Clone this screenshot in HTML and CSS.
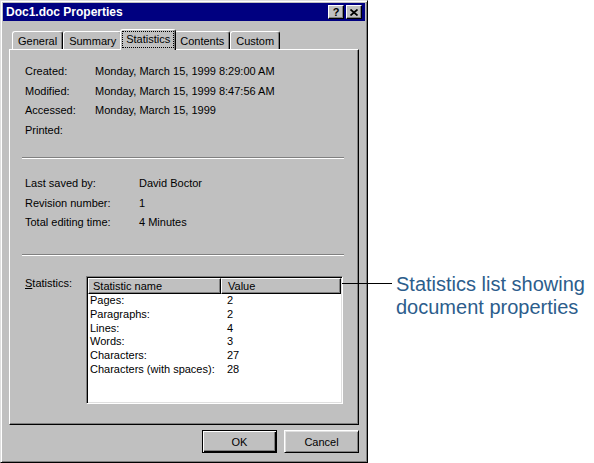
FILE: index.html
```html
<!DOCTYPE html>
<html>
<head>
<meta charset="utf-8">
<link rel="stylesheet" href="styles.css">
</head>
<body>
<div class="page">
  <div class="window">
    <div class="titlebar">
      <span class="title">Doc1.doc Properties</span>
      <div class="tbtns">
        <span class="tbtn help">?</span>
        <span class="tbtn close"><svg width="8" height="7" viewBox="0 0 8 7"><path d="M0.5 0.5 L7.5 6.5 M7.5 0.5 L0.5 6.5" stroke="#000" stroke-width="1.7" fill="none"/></svg></span>
      </div>
    </div>
    <div class="body">
      <div class="tabs">
        <div class="tab">General</div>
        <div class="tab">Summary</div>
        <div class="tab active"><span class="focus">Statistics</span></div>
        <div class="tab">Contents</div>
        <div class="tab">Custom</div>
      </div>
      <div class="panel">
        <div class="props p1">
          <span>Created:</span><span>Monday, March 15, 1999 8:29:00 AM</span>
          <span>Modified:</span><span>Monday, March 15, 1999 8:47:56 AM</span>
          <span>Accessed:</span><span>Monday, March 15, 1999</span>
          <span>Printed:</span><span></span>
        </div>
        <div class="sep s1"></div>
        <div class="props p2">
          <span>Last saved by:</span><span>David Boctor</span>
          <span>Revision number:</span><span>1</span>
          <span>Total editing time:</span><span>4 Minutes</span>
        </div>
        <div class="sep s2"></div>
        <div class="stats-row">
          <div class="stats-label"><u>S</u>tatistics:</div>
          <div class="listbox">
            <div class="lhead">
              <div class="hcell c1">Statistic name</div>
              <div class="hcell c2">Value</div>
            </div>
            <div class="lrows">
              <span>Pages:</span><span>2</span>
              <span>Paragraphs:</span><span>2</span>
              <span>Lines:</span><span>4</span>
              <span>Words:</span><span>3</span>
              <span>Characters:</span><span>27</span>
              <span>Characters (with spaces):</span><span>28</span>
            </div>
          </div>
        </div>
      </div>
      <div class="buttons">
        <button class="btn default">OK</button>
        <button class="btn">Cancel</button>
      </div>
    </div>
  </div>
  <div class="callout">
    <span class="leader"></span>
    <div class="callout-line">Statistics list showing</div>
    <div class="callout-line">document properties</div>
  </div>
</div>
</body>
</html>
```

FILE: styles.css
```css
html, body {
  margin: 0;
  padding: 0;
  background: #fff;
}

.page {
  display: flex;
  align-items: flex-start;
  font-family: "Liberation Sans", Arial, sans-serif;
  font-size: 11px;
  color: #000;
}

.window {
  box-sizing: border-box;
  width: 368px;
  height: 463px;
  background: #c0c0c0;
  border: 1px solid;
  border-color: #dfdfdf #000 #000 #dfdfdf;
  box-shadow: inset 1px 1px #fff, inset -1px -1px #808080;
  padding: 2px;
  display: flex;
  flex-direction: column;
}

.titlebar {
  height: 18px;
  background: #000080;
  display: flex;
  align-items: center;
  justify-content: space-between;
  padding: 0 3px 0 3px;
}

.title {
  color: #fff;
  font-weight: bold;
  font-size: 12px;
}

.tbtns {
  display: flex;
  gap: 2px;
}

.tbtn {
  box-sizing: border-box;
  width: 16px;
  height: 14px;
  background: #c0c0c0;
  border: 1px solid;
  border-color: #fff #000 #000 #fff;
  box-shadow: inset -1px -1px #808080;
  display: flex;
  align-items: center;
  justify-content: center;
  font-weight: bold;
  font-size: 11px;
  line-height: 12px;
}

.close svg {
  display: block;
  margin-left: -1px;
}

.body {
  flex: 1;
  padding: 0 6px;
  display: flex;
  flex-direction: column;
}

.tabs {
  height: 28px;
  display: flex;
  align-items: flex-end;
  padding-left: 3px;
}

.tab {
  height: 17px;
  line-height: 19px;
  padding: 0 5px;
  border: 1px solid;
  border-bottom: none;
  border-color: #fff #000 #000 #fff;
  border-radius: 3px 3px 0 0;
  box-shadow: inset -1px 0 #808080;
  background: #c0c0c0;
  white-space: nowrap;
}

.tab.active {
  position: relative;
  z-index: 1;
  line-height: 15px;
  padding: 1px 1px 0 1px;
  box-sizing: content-box;
  height: 19px;
  margin: 0 -2px -1px -2px;
}

.focus {
  display: inline-block;
  height: 15px;
  padding: 0 3px;
  border: 1px dotted #000;
}

.panel {
  box-sizing: border-box;
  height: 376px;
  border: 1px solid;
  border-color: #fff #000 #000 #fff;
  box-shadow: inset -1px -1px #808080;
  padding: 12px 0 0 12px;
}

.props {
  display: grid;
  line-height: 19.5px;
  padding-left: 3px;
}

.p1 {
  grid-template-columns: 70px 1fr;
}

.p2 {
  grid-template-columns: 114px 1fr;
  margin-top: 15px;
}

.sep {
  width: 322px;
  height: 0;
  border-top: 1px solid #808080;
  border-bottom: 1px solid #fff;
}

.s1 {
  margin-top: 17px;
}

.s2 {
  margin-top: 21.5px;
}

.stats-row {
  display: flex;
  margin-top: 20px;
}

.stats-label {
  width: 61px;
  padding-left: 3px;
  line-height: 14px;
}

.listbox {
  box-sizing: border-box;
  width: 257px;
  height: 128px;
  background: #fff;
  border: 1px solid;
  border-color: #808080 #fff #fff #808080;
  box-shadow: inset 1px 1px #000, inset -1px -1px #dfdfdf;
  padding: 1px;
}

.lhead {
  display: flex;
  height: 16px;
}

.hcell {
  box-sizing: border-box;
  height: 16px;
  line-height: 14px;
  background: #c0c0c0;
  border: 1px solid;
  border-color: #fff #000 #000 #fff;
  box-shadow: inset -1px -1px #808080;
}

.c1 {
  width: 133px;
  padding-left: 4px;
}

.c2 {
  flex: 1;
  padding-left: 6px;
}

.lrows {
  display: grid;
  grid-template-columns: 137px 1fr;
  line-height: 13.8px;
  padding-left: 2px;
}

.buttons {
  display: flex;
  justify-content: flex-end;
  gap: 7px;
  margin-top: 5px;
}

.btn {
  box-sizing: border-box;
  width: 75px;
  height: 23px;
  margin: 0;
  padding: 0;
  background: #c0c0c0;
  font-family: "Liberation Sans", Arial, sans-serif;
  font-size: 11px;
  color: #000;
  border: 1px solid;
  border-color: #fff #000 #000 #fff;
  box-shadow: inset 1px 1px #dfdfdf, inset -1px -1px #808080;
}

.btn.default {
  border-color: #000;
  box-shadow: inset 1px 1px #fff, inset -1px -1px #000, inset -2px -2px #808080;
}

.callout {
  position: relative;
  margin-left: 28px;
  margin-top: 273px;
}

.leader {
  position: absolute;
  left: -54px;
  top: 10px;
  width: 50px;
  height: 1px;
  background: #000;
}

.callout-line {
  font-family: "Liberation Sans", Arial, sans-serif;
  font-size: 20px;
  line-height: 23px;
  color: #2c5d8c;
  white-space: nowrap;
}
```
